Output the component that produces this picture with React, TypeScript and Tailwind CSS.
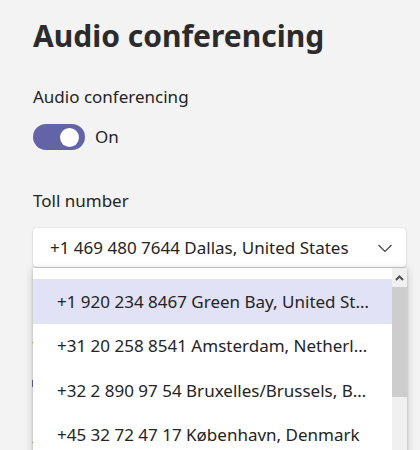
import React from "react";

const items = [
  "+1 920 234 8467 Green Bay, United States",
  "+31 20 258 8541 Amsterdam, Netherlands",
  "+32 2 890 97 54 Bruxelles/Brussels, Belgium",
  "+45 32 72 47 17 København, Denmark",
];

export default function App() {
  return (
    <div
      className="relative h-[450px] w-[420px] overflow-hidden bg-[#f3f3f3] text-[#242424]"
      style={{ fontFamily: '"Noto Sans", "Open Sans", sans-serif' }}
    >
      <div className="pl-[33px] pt-[16px]">
        <h1 className="text-[30px] font-bold leading-[40px] text-[#2b2b2b]">Audio conferencing</h1>
        <div className="mt-[30px] text-[17px] leading-[22px]">Audio conferencing</div>
        <div className="mt-[16px] flex items-center gap-[10px]">
          <div className="flex h-[26px] w-[52px] items-center justify-end rounded-full bg-[#6264a7] pr-[6px]">
            <div className="h-[19px] w-[19px] rounded-full bg-white" />
          </div>
          <span className="text-[17px] leading-[22px]">On</span>
        </div>
        <div className="mt-[40px] text-[17px] leading-[22px]">Toll number</div>
        <div className="mt-[16px] flex h-[39px] w-[373px] items-center justify-between rounded-[4px] bg-white pl-[17px] pr-[12px] shadow-[0_1px_2px_rgba(0,0,0,0.14),0_0_2px_rgba(0,0,0,0.12)]">
          <span className="text-[17px]">+1 469 480 7644 Dallas, United States</span>
          <svg width="18" height="18" viewBox="0 0 18 18" fill="none">
            <path d="M2.5 6 L9 12.5 L15.5 6" stroke="#424242" strokeWidth="1.2" />
          </svg>
        </div>
      </div>

      <div className="absolute left-[32px] top-[342px] h-[1px] w-[2px] bg-[#e8912d]" />
      <div className="absolute left-[32px] top-[380px] h-[7px] w-[2px] bg-[#6264a7]" />
      <div className="absolute left-[32px] top-[442px] h-[1px] w-[2px] bg-[#e8912d]" />

      <div className="absolute left-[33px] top-[268px] flex h-[200px] w-[374px] bg-white shadow-[0_2px_8px_rgba(0,0,0,0.22),0_0_2px_rgba(0,0,0,0.15)]">
        <div className="min-w-0 flex-1 pt-[11px]">
          {items.map((t, i) => (
            <div
              key={i}
              className={`flex h-[44.5px] items-center pl-[24px] pr-[23px] text-[17px] ${i === 0 ? "bg-[#e2e2f6]" : ""}`}
            >
              <span className="min-w-0 truncate">{t}</span>
            </div>
          ))}
        </div>
        <div className="flex w-[15px] flex-col items-center bg-[#f0f0f0]">
          <svg width="15" height="17" viewBox="0 0 15 17" className="mt-[2px]">
            <path d="M4 10 L7.5 6.5 L11 10" stroke="#505050" strokeWidth="2" fill="none" />
          </svg>
          <div className="h-[110px] w-[15px] bg-[#cdcdcd]" />
        </div>
      </div>
    </div>
  );
}
